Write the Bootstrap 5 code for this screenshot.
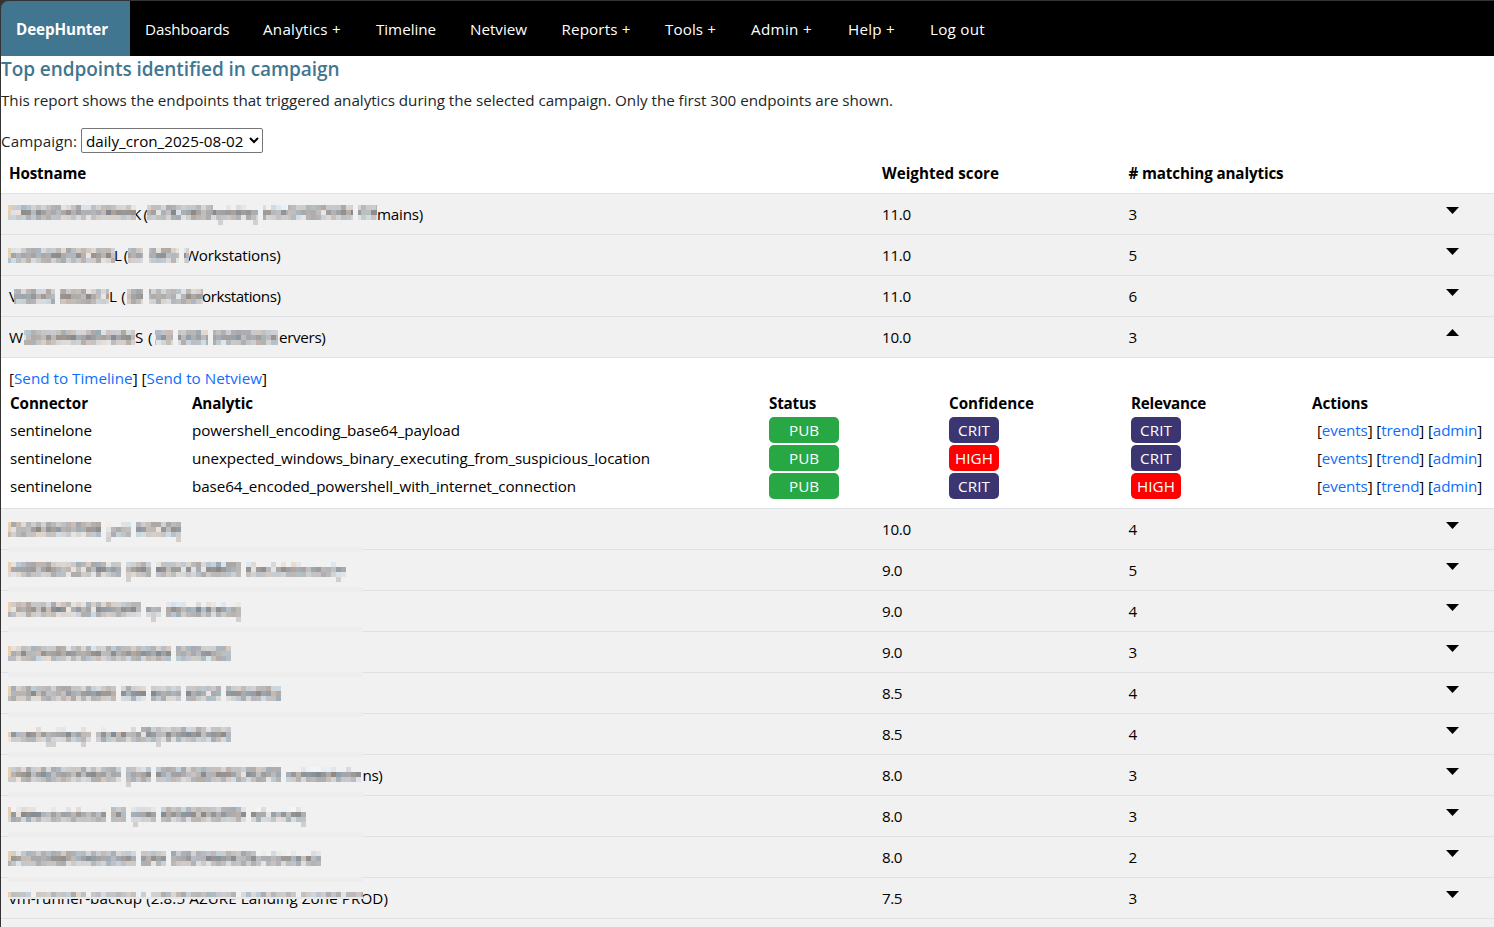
<!DOCTYPE html>
<html lang="en">
<head>
<meta charset="utf-8">
<title>DeepHunter</title>
<link href="https://cdn.jsdelivr.net/npm/bootstrap@5.3.0/dist/css/bootstrap.min.css" rel="stylesheet">
<style>
body{font-family:"Open Sans","Noto Sans",sans-serif;font-size:15.2px;line-height:24px;height:927px;overflow:hidden;background:#333;padding:1px 0 0 1px;color:#000;white-space:nowrap}
a{text-decoration:none}
.page{background:#fff;height:926px;border-top-left-radius:8px;overflow:hidden}
.topnav{height:55px;background:#000}
.brand{width:129px;background:#417690;font-weight:700;color:#fff;padding-left:15px}
.menu{padding-left:15px}
.topnav .nav-link{color:#fff;padding:0 34px 0 0}
.title{font-size:19px;font-weight:600;color:#417690;line-height:26px;height:32px}
.intro,.pick{color:#212529}
.pick{height:25px;margin-top:16px}
.pick select{width:182px;height:25px;margin-left:4px;border:1px solid #767676;border-radius:2px;background:#fff;color:#000;padding:0}
.line{height:41px;border-bottom:1px solid #dee2e6;position:relative}
.host-row{background:#f1f1f1}
.c-host{width:873px;padding-left:8px}
.c-score{width:247px;padding-left:8px}
.c-count{width:317px;padding-left:7.5px}
.caret{margin:13px 0 0 8px;align-self:flex-start;display:block}
.caret.up{margin-top:12px}
.detail{height:151px;border-bottom:1px solid #dee2e6;padding:8px 0 0 8px}
.d-line{height:28px;padding-left:1px}
.d-head{height:26px}
.w-a{width:182px}.w-b{width:577px}.w-c{width:180px}.w-d{width:182px}.w-e{width:181px}
.tag{height:26px;border-radius:5px;color:#fff;width:50px;text-align:center;line-height:26px}
.pub{width:70px;background:#28a745}
.crit{background:#3b3671}
.high{background:#f00}
.acts{margin-left:5px}
.veil{position:absolute;left:7px;z-index:1}
.fit{display:inline-block;white-space:pre}
</style>
</head>
<body>
<div class="page">
<nav class="topnav d-flex">
  <div class="brand d-flex align-items-center"><span class="fit" data-w="92">DeepHunter</span></div>
  <div class="menu d-flex align-items-center" id="menu"></div>
</nav>
<h1 class="title m-0"><span class="fit" data-w="338.5">Top endpoints identified in campaign</span></h1>
<p class="intro m-0"><span class="fit" data-w="892">This report shows the endpoints that triggered analytics during the selected campaign. Only the first 300 endpoints are shown.</span></p>
<div class="pick d-flex align-items-center"><span class="fit" data-w="76">Campaign:</span><select aria-label="Campaign"><option>daily_cron_2025-08-02</option></select></div>
<div class="line d-flex align-items-center fw-bold">
  <div class="c-host"><span class="fit" data-w="77">Hostname</span></div>
  <div class="c-score"><span class="fit" data-w="117">Weighted score</span></div>
  <div class="c-count"><span class="fit" data-w="155"># matching analytics</span></div>
</div>
<div id="rows"></div>
</div>
<script src="https://cdn.jsdelivr.net/npm/bootstrap@5.3.0/dist/js/bootstrap.bundle.min.js"></script>
<script>
const t = (s, w) => `<span class="fit" data-w="${w}">${s}</span>`;
document.getElementById('menu').innerHTML = [['Dashboards',84.5,118],['Analytics +',78,113],['Timeline',60,94],['Netview',57,91.5],['Reports +',69,103.5],['Tools +',51,86],['Admin +',61,97],['Help +',47,82],['Log out',55,55]]
  .map(([s,w,step]) => `<a class="nav-link" href="#" style="width:${step}px">${t(s,w)}</a>`).join('');

// Mosaic tiles that hide host names
const tints = [[0,0,0],[0,0,0],[0,0,0],[5,-2,-8],[-10,-2,8],[-3,-2,4],[10,0,-5],[-12,0,8],[0,0,0]];
function rnd(n){ const v = Math.sin(n*12.9898+4.1)*43758.5453; return v-Math.floor(v); }
function tiles(parts, seed, rows){
  let out = '';
  parts.forEach(([a,b,kind='U',desc=[]]) => {
    let x = a;
    while (x < b) {
      let nx = Math.min(b, x < 11 ? 11 : x + 5 - ((x - 11) % 5));
      for (let r = 0; r < rows; r++) {
        const q = rnd(seed*97 + x*3.7 + r*31);
        if (r === 0 && kind === 'L' && q < .45) continue;
        const base = r === 1 ? 138 : r === 0 ? (kind === 'L' ? 195 : 168) : 172;
        let g = base + q*(r === 1 ? 56 : 50);
        if (rnd(x*5+seed+r) > .96) g = 228;
        let c = tints[Math.floor(rnd(x+seed*13+r*7)*tints.length)].map(k => Math.round(g+k));
        if (x === 8 && r < 2) c = [232,208,180];
        out += `<rect x="${x-8}" y="${r*5}" width="${nx-x}" height="5" fill="rgb(${c})"/>`;
      }
      x = nx;
    }
    desc.forEach(d => out += `<rect x="${d-8}" y="15" width="5" height="5" fill="#d2cfcf"/>`);
  });
  return out;
}
function veil(parts, seed, top, rows, extra=''){
  return `<svg class="veil" style="top:${top}px" width="370" height="20" shape-rendering="crispEdges" aria-hidden="true">${extra}${tiles(parts,seed,rows)}</svg>`;
}
const gap = w => `<span class="d-inline-block flex-shrink-0" style="width:${w}px"></span>`;
// [name, score, count, tile parts, tile top, rows, seam offset]
const data = [
 [gap(123)+t('K (',15)+gap(230)+t('mains)',46),'11.0',3,[[8,136],[147,213],[213,258,'L',[218,253]],[263,288,'L'],[288,353],[358,377]],11],
 [gap(105)+t('L (',13)+gap(58)+t('Workstations)',95.5),'11.0',5,[[8,115],[128,143],[149,179],[184,189]],13],
 [t('V',8)+gap(92)+t('L (',17)+gap(76)+t('orkstations)',78.5),'11.0',6,[[14,55],[60,109],[127,143],[149,203]],13],
 [t('W',14)+gap(112)+t('S (',18)+gap(126)+t('ervers)',46.5),'10.0',3,[[24,135],[155,173],[178,208],[213,278]],13],
 ['','10.0',4,[[8,101],[106,131,'L',[106]],[136,181,'U',[176]]],13,3,38],
 ['','9.0',5,[[8,121],[126,151,'U',[126]],[156,241],[246,346,'L',[336]]],12,3,37],
 ['','9.0',4,[[8,141],[146,161,'L',[151]],[166,241,'L',[236]]],11,3,36],
 ['','9.0',3,[[8,171],[176,231]],14,3,40],
 ['','8.5',4,[[8,116],[121,146],[151,181],[186,221],[226,281]],13,3,39],
 ['','8.5',4,[[8,91,'L',[46,51,81]],[96,141,'L'],[141,231,'U',[156]]],13,3,38],
 [gap(353.5)+t('ns)',20),'8.0',3,[[8,121],[126,151,'U',[126]],[156,281],[286,361,'L']],12,3,37],
 ['','8.0',3,[[8,106,'L'],[111,126],[131,156,'L',[133]],[161,246],[251,306,'L',[301]]],11,3,36],
 ['','8.0',2,[[8,136],[141,166],[171,256],[256,321,'L']],14,3,40],
 [t('vm-runner-backup (2.8.5 AZURE Landing Zone PROD)',379),'7.5',3,[[8,31],[36,86],[91,136],[141,146],[151,236],[241,296],[301,363]],14,1,0],
 ['','','',[],0,3,0]
];
const acts = t('[<a href="#">events</a>] [<a href="#">trend</a>] [<a href="#">admin</a>]',165);
const tag = k => `<div class="tag ${k.toLowerCase()}">${t(k,{PUB:30,CRIT:32,HIGH:38}[k])}</div>`;
const detail = `<div class="detail"><div>${t('[<a href="#">Send to Timeline</a>] [<a href="#">Send to Netview</a>]',258)}</div>
 <div class="d-line d-head d-flex align-items-center fw-bold"><div class="w-a">${t('Connector',78)}</div><div class="w-b">${t('Analytic',61)}</div><div class="w-c">${t('Status',47)}</div><div class="w-d">${t('Confidence',85)}</div><div class="w-e">${t('Relevance',75)}</div>${t('Actions',56)}</div>`
 + [['powershell_encoding_base64_payload',268,'CRIT','CRIT'],['unexpected_windows_binary_executing_from_suspicious_location',458,'HIGH','CRIT'],['base64_encoded_powershell_with_internet_connection',384,'CRIT','HIGH']]
 .map(([n,w,c,r]) => `<div class="d-line d-flex align-items-center"><div class="w-a">${t('sentinelone',82)}</div><div class="w-b">${t(n,w)}</div><div class="w-c">${tag('PUB')}</div><div class="w-d">${tag(c)}</div><div class="w-e">${tag(r)}</div><div class="acts">${acts}</div></div>`).join('') + '</div>';
document.getElementById('rows').innerHTML = data.map(([n,s,k,parts,top,rows=3,seam=0],i) => {
  const up = i === 3;
  const cover = i === 13 ? '<rect width="355" height="7" fill="#f1f1f1"/><rect y="5" width="355" height="2" fill="#e6e7ea" opacity=".8"/>' : '';
  const band = seam ? `<svg class="veil" style="top:${seam}px" width="355" height="5"><rect width="355" height="5" fill="#ededed"/></svg>` : '';
  return `<div class="line host-row d-flex align-items-center"><div class="c-host d-flex">${n}</div><div class="c-score">${t(s,s.length>3?29:20)}</div><div class="c-count">${k}</div>`
   + (s ? `<svg class="caret ${up?'up':''}" width="13" height="7"><path d="${up?'M0 7L6.5 0L13 7Z':'M0 0H13L6.5 7Z'}"/></svg>` : '')
   + veil(parts,i+1,top,rows,cover) + band + '</div>' + (up ? detail : '');
}).join('');

document.querySelectorAll('.fit').forEach(e => {
  const n = e.textContent.length;
  if (n) e.style.letterSpacing = (e.dataset.w - e.getBoundingClientRect().width) / n + 'px';
});
</script>
</body>
</html>
